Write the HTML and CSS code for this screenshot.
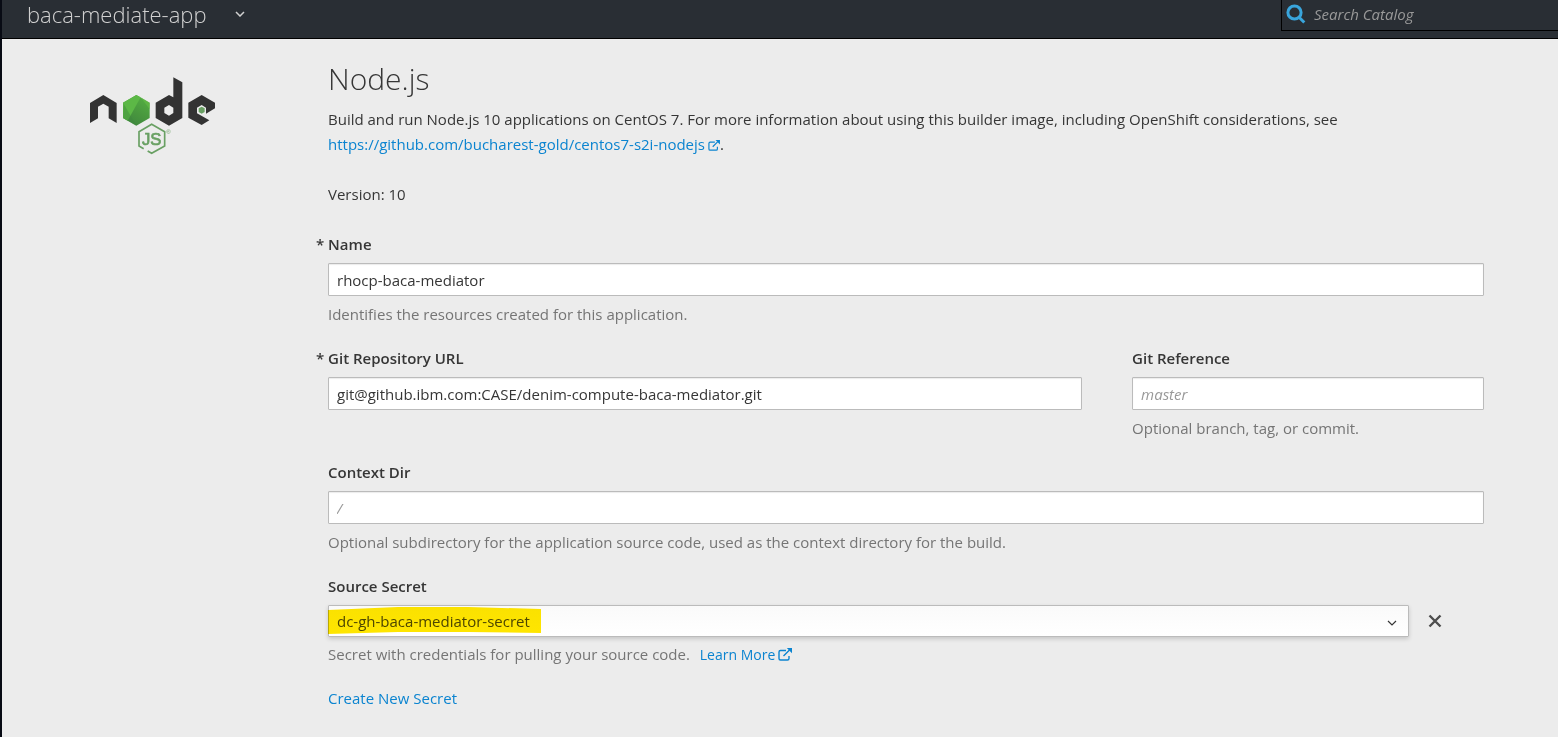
FILE: index.html
```html
<!DOCTYPE html>
<html lang="en">
<head>
<meta charset="utf-8">
<title>Node.js - baca-mediate-app</title>
<link rel="stylesheet" href="styles.css">
</head>
<body>
<header class="topbar">
  <button class="project" type="button">
    <span>baca-mediate-app</span>
    <svg class="chevron" viewBox="0 0 10 6" aria-hidden="true"><path d="M1 1l4 4 4-4"/></svg>
  </button>
  <label class="search">
    <svg class="search-icon" viewBox="0 0 20 20" aria-hidden="true"><circle cx="8.5" cy="8.500" r="6.600"/><path d="M13.300 13.500l5 5"/></svg>
    <input type="text" placeholder="Search Catalog" aria-label="Search Catalog">
  </label>
</header>
<main class="page">
  <aside class="side">
    <svg class="logo" viewBox="30 21 378 234" role="img" aria-label="Node.js logo">
      <defs>
        <linearGradient id="leaf" x1="0.8" y1="0" x2="0.3" y2="1">
          <stop offset="0.1" stop-color="#52ab42"/>
          <stop offset="0.6" stop-color="#48963e"/>
          <stop offset="1" stop-color="#3f873f"/>
        </linearGradient>
      </defs>
      <path fill="#333" d="M30 99l40-24 40 24v60l-24-14v-35l-16-9-16 9v35l-24 14z"/>
      <path fill="url(#leaf)" d="M129 98l40-23 40 23v46l-40 23-40-23z"/>
      <path fill="#5cb846" d="M129 98l40-23 13 7-39 70-14-8z"/>
      <path fill="#3f873f" d="M131 101l38 66-40-23z" opacity=".45"/>
      <path fill="#62ba46" d="M182 82l27 16v20z" opacity=".7"/>
      <path fill="#333" fill-rule="evenodd" d="M227 98l40-23 13 7v-60l27 15v107l-40 23-40-23zM267 105l-14 8v16l14 8 13-8v-16z"/>
      <path fill="#333" d="M325 98l40-23 40 23v17l-27 16v-18l-13-8-14 8v17l37 21-23 14-40-22z"/>
      <path fill="#69a063" d="M365 110l9 5v11l-9 5-9-5v-11z"/>
      <path fill="none" stroke="#69a063" stroke-width="5" d="M191 236l-14-8v-43l38-22 39 22v43l-39 22-12-7"/>
      <text class="logo-js" x="186" y="226">JS</text>
      <text class="logo-mark" x="259" y="191">®</text>
    </svg>
  </aside>
  <section class="content">
    <h1>Node.js</h1>
    <p class="about">Build and run Node.js 10 applications on CentOS 7. For more information about using this builder image, including OpenShift considerations, see <a href="#repo">https://github.com/bucharest-gold/centos7-s2i-nodejs <svg class="ext ext-small" viewBox="0 0 14 13" aria-hidden="true"><path class="line" d="M8 2.500H2.500a1.500 1.500 0 0 0-1.500 1.500v6.500a1.500 1.500 0 0 0 1.500 1.500h7a1.500 1.500 0 0 0 1.500-1.500V8M5.500 8l6-6"/><path class="head" d="M8.800 0H14v5.200z"/></svg></a>.</p>
    <p class="version">Version: 10</p>
    <form>
      <div class="field">
        <label class="required" for="name">* Name</label>
        <input class="control" id="name" type="text" value="rhocp-baca-mediator">
        <p class="help">Identifies the resources created for this application.</p>
      </div>
      <div class="row">
        <div class="field">
          <label class="required" for="repo">* Git Repository URL</label>
          <input class="control" id="repo" type="text" value="git@github.ibm.com:CASE/denim-compute-baca-mediator.git">
        </div>
        <div class="field">
          <label for="ref">Git Reference</label>
          <input class="control" id="ref" type="text" placeholder="master">
          <p class="help">Optional branch, tag, or commit.</p>
        </div>
      </div>
      <div class="field">
        <label for="dir">Context Dir</label>
        <input class="control" id="dir" type="text" placeholder="/">
        <p class="help">Optional subdirectory for the application source code, used as the context directory for the build.</p>
      </div>
      <div class="field">
        <label for="secret">Source Secret</label>
        <div class="picker">
          <div class="select">
            <select id="secret"><option>dc-gh-baca-mediator-secret</option></select>
            <svg class="chevron" viewBox="0 0 10 6" aria-hidden="true"><path d="M1 1l4 4 4-4"/></svg>
            <svg class="marker" viewBox="0 0 214 28" aria-hidden="true"><path d="M0 3L70 0h70l73 2v24l-73-1H70L0 27z"/></svg>
          </div>
          <button class="clear" type="button" aria-label="Clear secret"><svg viewBox="0 0 14 14" aria-hidden="true"><path d="M1.500 1.500l11 11M12.500 1.500l-11 11"/></svg></button>
        </div>
        <p class="help picker-help">Secret with credentials for pulling your source code. <a class="more" href="#learn">Learn More <svg class="ext" viewBox="0 0 14 13" aria-hidden="true"><path class="line" d="M8 2.500H2.500a1.500 1.500 0 0 0-1.500 1.500v6.500a1.500 1.500 0 0 0 1.500 1.500h7a1.500 1.500 0 0 0 1.500-1.500V8M5.500 8l6-6"/><path class="head" d="M8.800 0H14v5.200z"/></svg></a></p>
      </div>
      <a href="#new">Create New Secret</a>
    </form>
  </section>
</main>
</body>
</html>
```
FILE: styles.css
```css
* { box-sizing: border-box; }
html { background: #ececec; }
body {
  margin: 0;
  min-height: 100vh;
  border-left: 2px solid #080b14;
  background: #ececec;
  color: #363636;
  font: 15px/25px "Open Sans", sans-serif;
}
h1, p { margin: 0; }
a { color: #0b84d0; text-decoration: none; }
button, input, select { font: inherit; color: inherit; }
button { border: 0; padding: 0; background: none; }

.topbar {
  display: flex;
  justify-content: space-between;
  align-items: flex-start;
  height: 39px;
  border-bottom: 1px solid #000;
  background: #292e34;
}
.project {
  display: flex;
  align-items: center;
  gap: 28px;
  padding-left: 25px;
  color: #d1d1d1;
  font-size: 22px;
  font-weight: 300;
  line-height: 28px;
}
.chevron {
  width: 10px;
  height: 6px;
  fill: none;
  stroke: currentColor;
  stroke-width: 1.5;
}
.search {
  display: flex;
  align-items: center;
  gap: 8px;
  width: 277px;
  height: 31px;
  padding: 0 0 2px 4px;
  border: solid #000;
  border-width: 0 0 1px 1px;
}
.search-icon {
  flex: none;
  width: 20px;
  height: 20px;
  fill: none;
  stroke: #39a5dc;
  stroke-width: 3;
}
.search input {
  min-width: 0;
  flex: 1;
  padding: 0;
  border: 0;
  background: none;
  color: #d1d1d1;
}
::placeholder { color: #999; font-style: italic; opacity: 1; }

.page { display: flex; padding: 20px 74px 20px 88px; }
.side { flex: none; width: 238px; padding-top: 18px; }
.logo { display: block; width: 126px; height: 78px; }
.logo-js {
  fill: #69a063;
  stroke: #69a063;
  stroke-width: 2;
  font: 50px "Liberation Sans", sans-serif;
}
.logo-mark { fill: #69a063; font: 18px "Liberation Sans", sans-serif; }
.content { flex: 1; min-width: 0; }
h1 { margin-bottom: 8px; font-size: 30px; font-weight: 300; line-height: 40px; }
.version { margin: 25px 0; }

.field { margin-bottom: 19px; }
.field label { display: block; width: fit-content; margin-bottom: 6px; font-weight: 600; }
.field .required { margin-left: -12px; }
.control, .select select {
  display: block;
  width: 100%;
  height: 33px;
  padding: 0 8px;
  border: 1px solid #bbb;
  border-radius: 1px;
  background: #fff;
  box-shadow: inset 0 1px 1px rgba(0, 0, 0, .08);
}
.help { margin-top: 6px; color: #757575; }
.row { display: grid; grid-template-columns: 15fr 7fr; gap: 50px; }
.picker { display: flex; align-items: center; gap: 19px; padding-right: 42px; }
.picker-help { margin-top: 5px; }
.select { position: relative; flex: 1; }
.select select {
  appearance: none;
  height: 32px;
  color: #4d4d4d;
  background: linear-gradient(#fafafa, #fff);
  box-shadow: 0 2px 4px rgba(0, 0, 0, .16);
}
.select .chevron { position: absolute; top: 15px; right: 12px; stroke-width: 1.2; }
.marker {
  position: absolute;
  top: 2px;
  left: 0;
  width: 214px;
  height: 28px;
  fill: #ffe600;
  mix-blend-mode: multiply;
  pointer-events: none;
}
.clear { display: flex; margin-right: -42px; padding-right: 42px; }
.clear svg { width: 14px; height: 14px; stroke: #4d4d4d; stroke-width: 2.4; }
.more { margin-left: 6px; font-size: 14px; }
.ext { width: 14px; height: 13px; margin-left: -1px; vertical-align: -1px; }
.ext-small { width: 12px; height: 11px; }
.ext .line { fill: none; stroke: currentColor; stroke-width: 1.4; }
.ext .head { fill: currentColor; }
```
